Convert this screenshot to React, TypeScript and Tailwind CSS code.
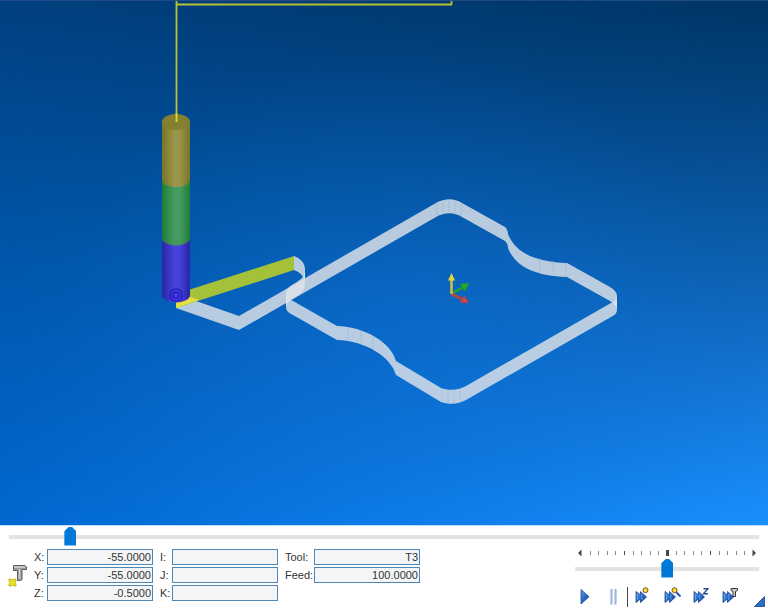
import { useState } from "react";
import type { ReactNode } from "react";
import clsx from "clsx";

type Pt = [number, number];

const DEPTH = 14;

// Toolpath wall segments: 2 points = line, 4 points = cubic curve (top edge).
// Curves that fold back are split where they run vertical.
const WALLS: Pt[][] = [
  [[176, 294], [239, 316]],
  [[239, 316], [436, 203]],
  [[436, 203], [445, 198], [454, 198], [462, 203]],
  [[462, 203], [505, 227]],
  [[505, 227], [507, 229], [508, 231], [508, 234]],
  [[508, 234], [515, 252], [534, 262], [567, 263]],
  [[567, 263], [610, 287]],
  [[610, 287], [614, 290], [617, 292], [617, 296]],
  [[617, 296], [617, 299], [615, 301], [611, 303]],
  [[611, 303], [466, 386]],
  [[466, 386], [459, 390], [450, 391], [441, 388]],
  [[441, 388], [396, 361]],
  [[396, 361], [391, 343], [366, 327], [337, 326]],
  [[337, 326], [293, 301]],
  [[293, 301], [289, 299], [286, 297], [286, 293]],
  [[286, 293], [286, 290], [289, 287], [292, 285]],
  [[292, 285], [300, 280], [305, 278], [305, 269]],
  [[305, 269], [305, 263], [300, 258], [294, 256]],
];

function wallPath(pts: Pt[]) {
  const fmt = (p: Pt) => `${p[0]} ${p[1]}`;
  const low = pts.map(([x, y]): Pt => [x, y + DEPTH]).reverse();
  const cmd = pts.length === 2 ? "L" : "C";
  return `M${fmt(pts[0])} ${cmd}${pts.slice(1).map(fmt).join(" ")} L${fmt(low[0])} ${cmd}${low.slice(1).map(fmt).join(" ")} Z`;
}

function Scene() {
  return (
    <div className="relative flex-1 border-t border-[#1f4a86] bg-linear-to-b from-[#00407f] via-[#0057ac] to-[#0068d0]">
      <div className="absolute inset-0 bg-linear-to-b from-[#003565] via-[#0d60b0] to-[#1a8fff] [mask-image:linear-gradient(to_right,transparent,black)]" />
      <div className="absolute inset-0 bg-[radial-gradient(ellipse_at_52%_60%,rgba(12,120,230,0.3),transparent_60%)]" />
      <svg viewBox="0 1 768 524" className="absolute inset-0 h-full w-full" role="img" aria-label="Toolpath view">
        <defs>
          <linearGradient id="holder">
            <stop offset="0" stopColor="#777523" />
            <stop offset=".45" stopColor="#9b964b" />
            <stop offset=".65" stopColor="#999449" />
            <stop offset="1" stopColor="#777524" />
          </linearGradient>
          <linearGradient id="shank">
            <stop offset="0" stopColor="#207c35" />
            <stop offset=".45" stopColor="#479a62" />
            <stop offset=".65" stopColor="#469960" />
            <stop offset="1" stopColor="#217e37" />
          </linearGradient>
          <linearGradient id="flute">
            <stop offset="0" stopColor="#2925a5" />
            <stop offset=".45" stopColor="#4843dd" />
            <stop offset=".65" stopColor="#4540d8" />
            <stop offset="1" stopColor="#2824a4" />
          </linearGradient>
        </defs>

        {/* rapid moves */}
        <path d="M176.500 1V120M176 4.500H452M451.500 1V5" fill="none" stroke="#b9c234" strokeWidth="1.800" />

        {/* cut walls */}
        <g fill="#dfe3e8" fillOpacity=".82">
          {WALLS.map((w, i) => (
            <path key={i} d={wallPath(w)} />
          ))}
        </g>
        <path
          d="M437 202v14M443 200v13M449 199v14M455 200v13M461 202v14M540 258v14M553 261v14M566 263v13M348 327v14M361 331v14M373 337v14M442 388v14M448 390v14M454 390v14M460 389v14"
          stroke="#7fa3c9"
          strokeWidth=".7"
          strokeDasharray="1 1"
        />

        {/* current move */}
        <path d="M176 294L294 256V270L176 308Z" fill="#a5c13a" />
        <path d="M176 303L190 297L199 300L176 308Z" fill="#e5df40" />

        {/* tool */}
        <path d="M162 238V295A14 7.500 0 0 0 190 295V238Z" fill="url(#flute)" />
        <path d="M162 180V238A14 7.500 0 0 0 190 238V180Z" fill="url(#shank)" />
        <path d="M162 121V180A14 7 0 0 0 190 180V121Z" fill="url(#holder)" />
        <ellipse cx="176" cy="122" rx="14" ry="8" fill="#83812f" />
        <path d="M176.500 113V122" stroke="#d8db28" strokeWidth="1.800" />
        <g fill="none" stroke="#211cc4" strokeWidth="1.500">
          <circle cx="176" cy="295" r="6" />
          <circle cx="176" cy="295" r="3" />
        </g>

        {/* origin triad */}
        <path d="M451.500 293.500L463 287.500" stroke="#249b3c" strokeWidth="3" />
        <path d="M460.500 284L469 283.500L464.500 291Z" fill="#1fae2a" stroke="#23913a" />
        <path d="M451.500 294L463 299.500" stroke="#b5483c" strokeWidth="3" />
        <path d="M464 296L469 303L460 302Z" fill="#d04a35" stroke="#9d4468" />
        <path d="M451.500 294V278" stroke="#cfc53c" strokeWidth="2.500" />
        <path d="M451.500 273L455 280.500H448Z" fill="#e0d53a" />
      </svg>
    </div>
  );
}

interface SliderProps {
  label: string;
  value: number;
  onChange: (v: number) => void;
}

function Slider({ label, value, onChange }: SliderProps) {
  return (
    <input
      type="range"
      aria-label={label}
      min={0}
      max={1000}
      value={value}
      onChange={(e) => onChange(Number(e.target.value))}
      className="block h-[19px] w-full cursor-pointer appearance-none bg-transparent [&::-webkit-slider-runnable-track]:h-1 [&::-webkit-slider-runnable-track]:bg-[#e1e4e1] [&::-webkit-slider-thumb]:-mt-2 [&::-webkit-slider-thumb]:h-[19px] [&::-webkit-slider-thumb]:w-3 [&::-webkit-slider-thumb]:appearance-none [&::-webkit-slider-thumb]:bg-[#0078d7] [&::-webkit-slider-thumb]:[clip-path:polygon(0_25%,40%_0,60%_0,100%_25%,100%_100%,0_100%)]"
    />
  );
}

function Field({ label, value, labelClass }: { label: string; value: string; labelClass: string }) {
  return (
    <label className="flex h-4 items-center">
      <span className={clsx("shrink-0 whitespace-nowrap", labelClass)}>{label}:</span>
      <input
        readOnly
        defaultValue={value}
        className="h-4 w-[106px] border border-[#4f86b3] bg-[#f4f5f7] px-px text-right outline-none"
      />
    </label>
  );
}

function ToolIcon() {
  return (
    <svg width="20" height="24" viewBox="0 0 20 24" className="mt-[15px] shrink-0" aria-hidden="true">
      <path d="M5.500 1.500H17L18.500 3V5.500H14V15.500L12.500 16.500H9.500V6.500H5.500Z" fill="#9a9a9a" stroke="#5b5b5b" />
      <path d="M6 3H17M11.500 5V15" stroke="#d4d4d4" strokeWidth="1.500" />
      <path d="M1 15H3L4 16L6 15H8V17L7 18.500L8 20V22H6L4.500 21L3 22H1V20L2 18.500L1 17Z" fill="#ece21c" stroke="#b3a91d" strokeWidth=".8" />
    </svg>
  );
}

function FastForward({ children }: { children: ReactNode }) {
  return (
    <svg width="20" height="20" viewBox="0 0 20 20" aria-hidden="true">
      <path d="M3 4.500L7.500 8V4.500L13.500 10L7.500 15.500V12L3 15.500Z" fill="url(#btn)" stroke="#1c3f92" strokeWidth=".8" />
      <path d="M4.500 7V13.500M8.800 7V13" stroke="#5ca3e6" strokeWidth=".9" />
      {children}
    </svg>
  );
}

const BUTTONS: { label: string; icon: ReactNode }[] = [
  {
    label: "Play",
    icon: (
      <svg width="20" height="20" viewBox="0 0 20 20" aria-hidden="true">
        <defs>
          <linearGradient id="btn" x2="1" y2="1">
            <stop offset="0" stopColor="#58a8ee" />
            <stop offset=".5" stopColor="#266dc4" />
            <stop offset="1" stopColor="#173f9a" />
          </linearGradient>
        </defs>
        <path d="M6 2.500L14 9.800L6 17Z" fill="url(#btn)" stroke="#1c4495" strokeWidth=".8" />
      </svg>
    ),
  },
  {
    label: "Pause",
    icon: (
      <svg width="20" height="20" viewBox="0 0 20 20" aria-hidden="true">
        <path d="M8.500 2V17.500M12.500 2V17.500" stroke="#8fa4d2" strokeWidth="2" />
        <path d="M8 2V17.500M12 2V17.500" stroke="#c4d1ec" strokeWidth=".8" />
      </svg>
    ),
  },
  {
    label: "Run to next operation",
    icon: (
      <FastForward>
        <circle cx="12.500" cy="3.200" r="2.500" fill="#ffe31a" stroke="#7a4a4a" />
      </FastForward>
    ),
  },
  {
    label: "Run to point",
    icon: (
      <FastForward>
        <path d="M14 5L18.500 9.500" stroke="#2459b8" strokeWidth="2" />
        <circle cx="12.500" cy="3.200" r="2.500" fill="#ffe31a" stroke="#7a4a4a" />
      </FastForward>
    ),
  },
  {
    label: "Run to next Z",
    icon: (
      <FastForward>
        <path d="M12.500 1.800H16.800L12.500 6.800H17" fill="none" stroke="#284b91" strokeWidth="1.400" />
      </FastForward>
    ),
  },
  {
    label: "Run to tool change",
    icon: (
      <FastForward>
        <path d="M11 1.500H17.500V3.500L15.500 4.500V9.500H13V4.500L11 3.500Z" fill="#c9c9c9" stroke="#383838" />
      </FastForward>
    ),
  },
];

function SpeedTicks() {
  const ticks = Array.from({ length: 19 }, (_, i) => i + 1);
  return (
    <svg viewBox="0 0 184 9" className="block w-full" aria-hidden="true">
      <path d="M3 4L6.500 .500V7.500ZM181 4L177.500 .500V7.500Z" fill="#474747" />
      {ticks.map((i) => (
        <rect
          key={i}
          x={i === 10 ? 91 : Math.round(6 + i * 8.6)}
          y={i === 10 ? 1 : 2}
          width={i === 10 ? 3 : 1}
          height={i === 10 ? 6 : 4}
          fill={i % 5 === 0 ? "#474747" : "#8a8a8a"}
        />
      ))}
    </svg>
  );
}

export default function App() {
  const [progress, setProgress] = useState(75);
  const [speed, setSpeed] = useState(502);

  return (
    <div className="flex min-h-screen flex-col bg-white font-['Liberation_Sans',Arial,sans-serif] text-[11px] leading-4 text-[#333]">
      <Scene />

      <div className="border-t border-[#b9daf5] pt-px">
        <div className="px-[9px]">
          <Slider label="Position" value={progress} onChange={setProgress} />
        </div>

        <div className="flex justify-between pt-[3px] pr-[3px] pb-1.5 pl-2">
          <div className="flex">
            <ToolIcon />
            <div className="flex gap-[7px] pl-1.5">
              <div className="flex flex-col gap-0.5">
                <Field label="X" value="-55.0000" labelClass="w-[13px]" />
                <Field label="Y" value="-55.0000" labelClass="w-[13px]" />
                <Field label="Z" value="-0.5000" labelClass="w-[13px]" />
              </div>
              <div className="flex flex-col gap-0.5">
                <Field label="I" value="" labelClass="w-3" />
                <Field label="J" value="" labelClass="w-3" />
                <Field label="K" value="" labelClass="w-3" />
              </div>
              <div className="flex flex-col gap-0.5">
                <Field label="Tool" value="T3" labelClass="w-[29px]" />
                <Field label="Feed" value="100.0000" labelClass="w-[29px]" />
              </div>
            </div>
          </div>

          <div className="w-[195px]">
            <div className="pr-1.5 pl-[5px]">
              <SpeedTicks />
              <div className="pt-px">
                <Slider label="Speed" value={speed} onChange={setSpeed} />
              </div>
            </div>
            <div className="flex pt-[9px]">
              {BUTTONS.map(({ label, icon }) => (
                <button
                  key={label}
                  type="button"
                  aria-label={label}
                  title={label}
                  className={clsx("flex h-5 w-[29px] items-center justify-center", label === "Pause" && "border-r border-[#4b4b4b]")}
                >
                  {icon}
                </button>
              ))}
              <svg width="11" height="11" viewBox="0 0 11 11" className="ml-auto self-end" aria-hidden="true">
                <path d="M10.500 .500V10.500H.500Z" fill="#2d6cc2" stroke="#1c4190" strokeWidth=".8" />
              </svg>
            </div>
          </div>
        </div>
      </div>
    </div>
  );
}
